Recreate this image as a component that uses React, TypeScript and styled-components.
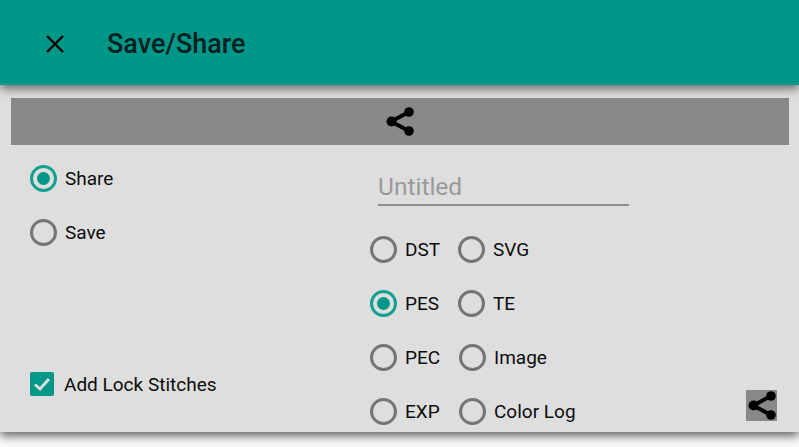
import styled, { createGlobalStyle } from "styled-components";

const GlobalStyle = createGlobalStyle`
  html, body {
    margin: 0;
    background: #fafafa;
    font-family: Roboto, "Liberation Sans", sans-serif;
  }
`;

const Page = styled.div`
  width: 799px;
  height: 447px;
  overflow: hidden;
`;

const Header = styled.header`
  position: relative;
  z-index: 1;
  display: flex;
  align-items: center;
  height: 85px;
  padding: 3px 0 0 45px;
  box-sizing: border-box;
  background: #009688;
  box-shadow: 0 4px 9px rgba(0, 0, 0, 0.5);
`;

const CloseIcon = styled.svg`
  width: 20px;
  height: 20px;
  margin-right: 42px;
  stroke: #000;
  stroke-width: 2.4;
  fill: none;
`;

const Title = styled.h1`
  margin: 0;
  font-size: 27px;
  font-weight: 500;
  color: #06201e;
`;

const Panel = styled.main`
  height: 347px;
  padding: 13px 10px 0 11px;
  box-sizing: border-box;
  background: #dedede;
  box-shadow: 0 4px 9px rgba(0, 0, 0, 0.6);
`;

const ShareBar = styled.div`
  position: relative;
  z-index: 2;
  display: flex;
  align-items: center;
  justify-content: center;
  height: 47px;
  background: #898989;
`;

const Columns = styled.div`
  display: grid;
  grid-template-columns: 359px 376px 31px;
  height: 287px;
`;

const LeftColumn = styled.div`
  display: flex;
  flex-direction: column;
  padding: 19px 0 36px 19px;
`;

const RightColumn = styled.div`
  display: flex;
  flex-direction: column;
`;

const Option = styled.label<{ $nudge?: boolean }>`
  display: flex;
  align-items: center;
  gap: 8px;
  height: 27px;
  margin-left: ${(props) => (props.$nudge ? "1px" : "0")};
  padding-top: 1px;
  font-size: 19px;
  color: #0c0c0c;
`;

const SaveOption = styled(Option)`
  margin-top: 26px;
`;

const Radio = styled.span<{ $checked?: boolean }>`
  display: flex;
  align-items: center;
  justify-content: center;
  flex: none;
  width: 27px;
  height: 27px;
  margin-top: -1px;
  box-sizing: border-box;
  border-radius: 50%;
  border: 3px solid ${(props) => (props.$checked ? "#13a08f" : "#757575")};

  &::after {
    content: "";
    display: ${(props) => (props.$checked ? "block" : "none")};
    width: 13px;
    height: 13px;
    border-radius: 50%;
    background: #009688;
  }
`;

const CheckRow = styled.label`
  display: flex;
  align-items: center;
  gap: 10px;
  margin-top: auto;
  font-size: 19px;
  color: #0c0c0c;
`;

const CheckBox = styled.span`
  display: flex;
  align-items: center;
  justify-content: center;
  width: 24px;
  height: 24px;
  border-radius: 2px;
  background: #009688;
`;

const NameField = styled.div`
  width: 251px;
  height: 61px;
  margin-left: 8px;
  padding-top: 27px;
  box-sizing: border-box;
  border-bottom: 2px solid #8e8e8e;
  font-size: 24.5px;
  line-height: 29px;
  color: #9a9a9a;
`;

const FormatGrid = styled.div`
  display: grid;
  grid-template-columns: 88px auto;
  grid-auto-rows: 27px;
  row-gap: 27px;
  margin-top: 29px;
`;

const IconButton = styled.div`
  display: flex;
  align-items: center;
  justify-content: center;
  align-self: end;
  width: 31px;
  height: 31px;
  margin-bottom: 11px;
  background: #898989;
`;

const formats = [
  { label: "DST" },
  { label: "SVG" },
  { label: "PES", checked: true },
  { label: "TE" },
  { label: "PEC" },
  { label: "Image", nudge: true },
  { label: "EXP" },
  { label: "Color Log", nudge: true },
];

function ShareIcon() {
  return (
    <svg width="28" height="29" viewBox="0 0 28 29">
      <path d="M5 14.5 23 5M5 14.5 23 24" stroke="#000" strokeWidth="4" fill="none" />
      <circle cx="5.5" cy="14.5" r="5" />
      <circle cx="23" cy="5" r="4.8" />
      <circle cx="23" cy="24" r="4.8" />
    </svg>
  );
}

function App() {
  return (
    <Page>
      <GlobalStyle />
      <Header>
        <CloseIcon viewBox="0 0 20 20">
          <path d="M2 2 18 18M18 2 2 18" />
        </CloseIcon>
        <Title>Save/Share</Title>
      </Header>
      <Panel>
        <ShareBar>
          <ShareIcon />
        </ShareBar>
        <Columns>
          <LeftColumn>
            <Option>
              <Radio $checked />
              Share
            </Option>
            <SaveOption>
              <Radio />
              Save
            </SaveOption>
            <CheckRow>
              <CheckBox>
                <svg width="20" height="20" viewBox="0 0 20 20">
                  <path d="M3 10.5 8 15 17 5" stroke="#dedede" strokeWidth="3" fill="none" />
                </svg>
              </CheckBox>
              Add Lock Stitches
            </CheckRow>
          </LeftColumn>
          <RightColumn>
            <NameField>Untitled</NameField>
            <FormatGrid>
              {formats.map((format) => (
                <Option key={format.label} $nudge={format.nudge}>
                  <Radio $checked={format.checked} />
                  {format.label}
                </Option>
              ))}
            </FormatGrid>
          </RightColumn>
          <IconButton>
            <ShareIcon />
          </IconButton>
        </Columns>
      </Panel>
    </Page>
  );
}

export default App;
